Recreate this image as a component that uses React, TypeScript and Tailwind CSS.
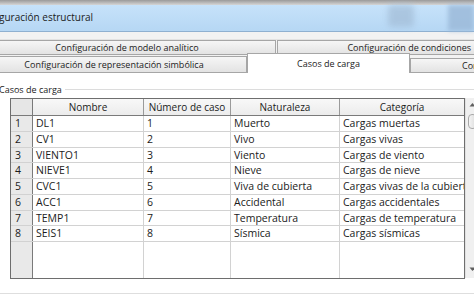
import React from "react";

const rows = [
  ["DL1", "1", "Muerto", "Cargas muertas"],
  ["CV1", "2", "Vivo", "Cargas vivas"],
  ["VIENTO1", "3", "Viento", "Cargas de viento"],
  ["NIEVE1", "4", "Nieve", "Cargas de nieve"],
  ["CVC1", "5", "Viva de cubierta", "Cargas vivas de la cubierta"],
  ["ACC1", "6", "Accidental", "Cargas accidentales"],
  ["TEMP1", "7", "Temperatura", "Cargas de temperatura"],
  ["SEIS1", "8", "Sísmica", "Cargas sísmicas"],
];

const cols = "grid-cols-[22px_111px_87px_109px_124px]";

const App: React.FC = () => {
  return (
    <div
      className="w-[474px] h-[299px] overflow-hidden bg-white text-[#1b1b1b] text-[10px] leading-none"
      style={{ fontFamily: '"Open Sans", "Noto Sans", sans-serif' }}
    >
      {/* window title */}
      <div className="h-[5px] bg-gradient-to-b from-[#9a9a9a] to-[#d6d6d6]" />
      <div className="relative h-[27px] bg-gradient-to-b from-[#c6e2fa] to-[#b6d7f4] border-b border-[#8fb0d0] flex items-center">
        <span className="text-[10px] ml-[-1px] mt-[-2px]">guración estructural</span>
        <div className="absolute left-[388px] top-0 w-[26px] h-[22px] rounded-sm bg-[#a2bcd6] opacity-70 blur-[3px]" />
        <div className="absolute left-[448px] top-0 w-[26px] h-[26px] bg-[#9ab8d8] opacity-80 blur-[2px]" />
      </div>
      <div className="h-[8px] bg-[#f2f2f2] border-b border-[#e2e2e2]" />

      {/* tabs, back row */}
      <div className="flex h-[15px] bg-[#f2f2f2] text-[9px] overflow-hidden">
        <div className="shrink-0 w-[298px] ml-[-22px] border border-[#a6a6a6] bg-gradient-to-b from-[#f6f6f6] to-[#e3e3e3] flex items-center justify-center">
          Configuración de modelo analítico
        </div>
        <div className="shrink-0 w-[198px] ml-[1px] border border-r-0 border-[#a6a6a6] bg-gradient-to-b from-[#f6f6f6] to-[#e3e3e3] flex items-center justify-end overflow-hidden whitespace-nowrap">
          <span className="mr-[4px]">Configuración de condiciones</span>
        </div>
      </div>

      {/* tabs, front row */}
      <div className="flex h-[18px] bg-[#f2f2f2] items-end border-b border-[#a6a6a6] text-[9px] overflow-x-clip">
        <div className="shrink-0 w-[266px] ml-[-19px] h-[17px] mb-[-1px] border border-[#a6a6a6] bg-gradient-to-b from-[#f6f6f6] to-[#e3e3e3] flex items-center justify-center">
          Configuración de representación simbólica
        </div>
        <div className="shrink-0 w-[163px] h-[20px] mb-[-1px] border border-b-0 border-[#a6a6a6] bg-white flex items-center justify-center relative z-10">
          Casos de carga
        </div>
        <div className="shrink-0 w-[64px] h-[15px] mb-[-1px] border border-r-0 border-[#a6a6a6] bg-gradient-to-b from-[#f6f6f6] to-[#e3e3e3] flex items-center overflow-hidden whitespace-nowrap">
          <span className="ml-[51px]">Configuración</span>
        </div>
      </div>

      {/* group box */}
      <div className="relative pt-[11px]">
        <div className="flex items-center h-[10px] text-[9px]">
          <span className="ml-[-1px] pr-[3px]">Casos de carga</span>
          <div className="flex-1 h-px bg-[#dcdcdc] mt-[1px]" />
        </div>

        <div className="flex mt-[4px] ml-[10px]">
          <div className="border border-[#6e6e6e] bg-white">
            {/* header */}
            <div className={`grid ${cols} h-[17px] bg-gradient-to-b from-[#f8f8f8] to-[#ececec] border-b border-[#7a7a7a]`}>
              <div className="border-r border-[#7a7a7a] bg-[#e6e6e6]" />
              {["Nombre", "Número de caso", "Naturaleza", "Categoría"].map((h, i) => (
                <div
                  key={h}
                  className={`flex items-center justify-center ${i < 3 ? "border-r border-[#9a9a9a]" : ""}`}
                >
                  {h}
                </div>
              ))}
            </div>
            {/* body */}
            {rows.map((r, idx) => (
              <div key={idx} className={`grid ${cols} h-[15.75px] border-b border-[#d2d2d2] text-[10.5px]`}>
                <div className="border-r border-[#7a7a7a] bg-[#e9e9e9] flex items-center pl-[4px]">
                  {idx + 1}
                </div>
                {r.map((c, j) => (
                  <div
                    key={j}
                    className={`flex items-center pl-[3px] overflow-hidden whitespace-nowrap ${j < 3 ? "border-r border-[#d2d2d2]" : ""}`}
                  >
                    {c}
                  </div>
                ))}
              </div>
            ))}
            {/* empty area */}
            <div className={`grid ${cols} h-[36px]`}>
              <div className="border-r border-[#7a7a7a] bg-[#e9e9e9]" />
              <div className="border-r border-[#d2d2d2]" />
              <div className="border-r border-[#d2d2d2]" />
              <div className="border-r border-[#d2d2d2]" />
              <div />
            </div>
          </div>

          {/* scrollbar */}
          <div className="w-[11px] h-[180px] bg-[#f0f0f0] border-l border-[#e0e0e0] relative">
            <svg className="absolute left-[3px] top-[4px]" width="7" height="5" viewBox="0 0 7 5">
              <path d="M0.5 4.5 L3.5 1 L6.5 4.5 Z" fill="#606060" />
            </svg>
            <div className="absolute left-[2px] top-[16px] w-[9px] h-[15px] rounded-sm border border-[#a8a8a8] bg-gradient-to-r from-[#f4f4f4] to-[#dcdcdc]" />
            <svg className="absolute left-[3px] bottom-[6px]" width="7" height="5" viewBox="0 0 7 5">
              <path d="M0.5 0.5 L3.5 4 L6.5 0.5 Z" fill="#606060" />
            </svg>
          </div>
        </div>

        <div className="mt-[14px] h-px bg-[#dedede]" />
      </div>
    </div>
  );
};

export default App;
